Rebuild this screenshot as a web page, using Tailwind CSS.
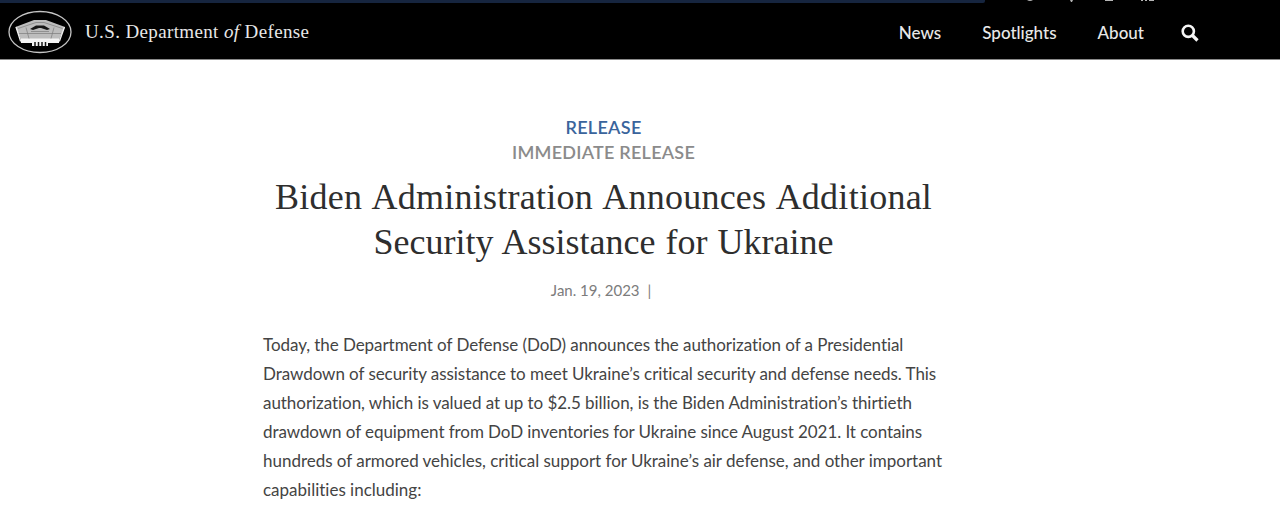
<!DOCTYPE html>
<html lang="en">
<head>
  <meta charset="UTF-8">
  <meta name="viewport" content="width=device-width, initial-scale=1.0">
  <title>Biden Administration Announces Additional Security Assistance for Ukraine</title>
  <script src="https://cdn.jsdelivr.net/npm/@tailwindcss/browser@4"></script>
</head>
<body class="bg-white font-['Lato',sans-serif] [font-variant-ligatures:none] h-[518px] overflow-hidden">
  <header class="relative bg-black h-[59px] flex items-center justify-between pl-2 pr-[81px] text-[#e8e8e8]">
    <!-- Bottom edge of the utility bar -->
    <div class="absolute top-0 left-0 w-[985px] h-[3px] bg-[#16253f] rounded-br-xs"></div>
    <svg class="absolute top-0 left-[1020px]" width="140" height="3" viewBox="0 0 140 3" fill="#b5b5b5">
      <path d="M7 0h6q-3 2-6 0zM50 0h3l-1 2h-1zM85 0h8v1h-8zM121 0h2v1h-2zM125 0h2v1h-2zM129 0h5v1h-5z"/>
    </svg>

    <a href="#" class="flex items-center pt-[5px]">
      <svg width="64" height="44" viewBox="0 0 64 44">
        <ellipse cx="32" cy="22" rx="31" ry="20.5" fill="none" stroke="#c4c4c4" stroke-width="1.3"/>
        <path d="M7.500 17L26 10h12l19 7-5.500 12v3h-39v-3z" fill="#bdbdbd"/>
        <path d="M12.500 28.500h39l-.5 4.500H40v3H24v-3H13z" fill="#f4f4f4"/>
        <path d="M8 17l4.500 14M56.500 17l-5 14" stroke="#f0f0f0" stroke-width="1.300"/>
        <path d="M22 19l6-3.500h8l6 3.500-3 1-6-2h-2l-6 2z" fill="#161616"/>
        <path d="M10 18.500L28 12.500h8l18.500 6M11 23.500h42M18 17.500l3 11M46 17.500l-3 11M23 21.500h18" fill="none" stroke="#7c7c7c" stroke-width=".7"/>
        <path d="M27 32v4M30.500 32v4M34 32v4M37.500 32v4" stroke="#151515" stroke-width="1.500"/>
      </svg>
      <span class="ml-[13px] font-['Liberation_Serif',serif] text-[19px] tracking-[0.37px] whitespace-nowrap">U.S. Department <i>of</i> Defense</span>
    </a>

    <nav class="flex items-center pt-[7px] text-[17px] font-medium whitespace-nowrap">
      <a href="#">News</a>
      <a href="#" class="ml-[41px]">Spotlights</a>
      <a href="#" class="ml-[41px]">About</a>
      <a href="#" class="ml-[37px]" aria-label="Search">
        <svg width="18" height="18" viewBox="0 0 18 18" fill="none" stroke="#f5f5f5">
          <circle cx="7.300" cy="7.300" r="5.600" stroke-width="2.600"/>
          <path d="M11.500 11.500l5 5" stroke-width="3.200"/>
        </svg>
      </a>
    </nav>
  </header>
  <div class="h-px bg-[#8a8a8a]"></div>

  <main class="ml-[263px] w-[681px] pt-[55px]">
    <div class="text-center">
      <div class="text-[18px] leading-[25px] font-semibold tracking-[0.3px] text-[#3a649c]">RELEASE</div>
      <div class="text-[18px] leading-[25px] font-semibold tracking-[0.25px] text-[#8b8b8b]">IMMEDIATE RELEASE</div>
      <h1 class="mt-[10px] font-['Liberation_Serif',serif] text-[36px] leading-[45px] text-[#2e2e2e] whitespace-nowrap">
        <span class="tracking-[0.25px] [word-spacing:2px]">Biden Administration Announces Additional</span><br>
        <span class="[word-spacing:1px]">Security Assistance for Ukraine</span>
      </h1>
      <p class="mt-[14px] -ml-[5px] text-[15px] leading-[22px] text-[#7c7c7c]">Jan. 19, 2023 <span class="ml-1">|</span></p>
    </div>
    <p class="mt-[29px] text-[17px] leading-[29px] text-[#444] whitespace-nowrap">
      <span class="tracking-[-0.06px]">Today, the Department of Defense (DoD) announces the authorization of a Presidential</span><br>
      <span class="tracking-[-0.06px]">Drawdown of security assistance to meet Ukraine’s critical security and defense needs. This</span><br>
      <span class="tracking-[-0.05px]">authorization, which is valued at up to $2.5 billion, is the Biden Administration’s thirtieth</span><br>
      <span class="tracking-[-0.07px]">drawdown of equipment from DoD inventories for Ukraine since August 2021. It contains</span><br>
      <span class="tracking-[-0.02px]">hundreds of armored vehicles, critical support for Ukraine’s air defense, and other important</span><br>
      capabilities including:
    </p>
  </main>
</body>
</html>
